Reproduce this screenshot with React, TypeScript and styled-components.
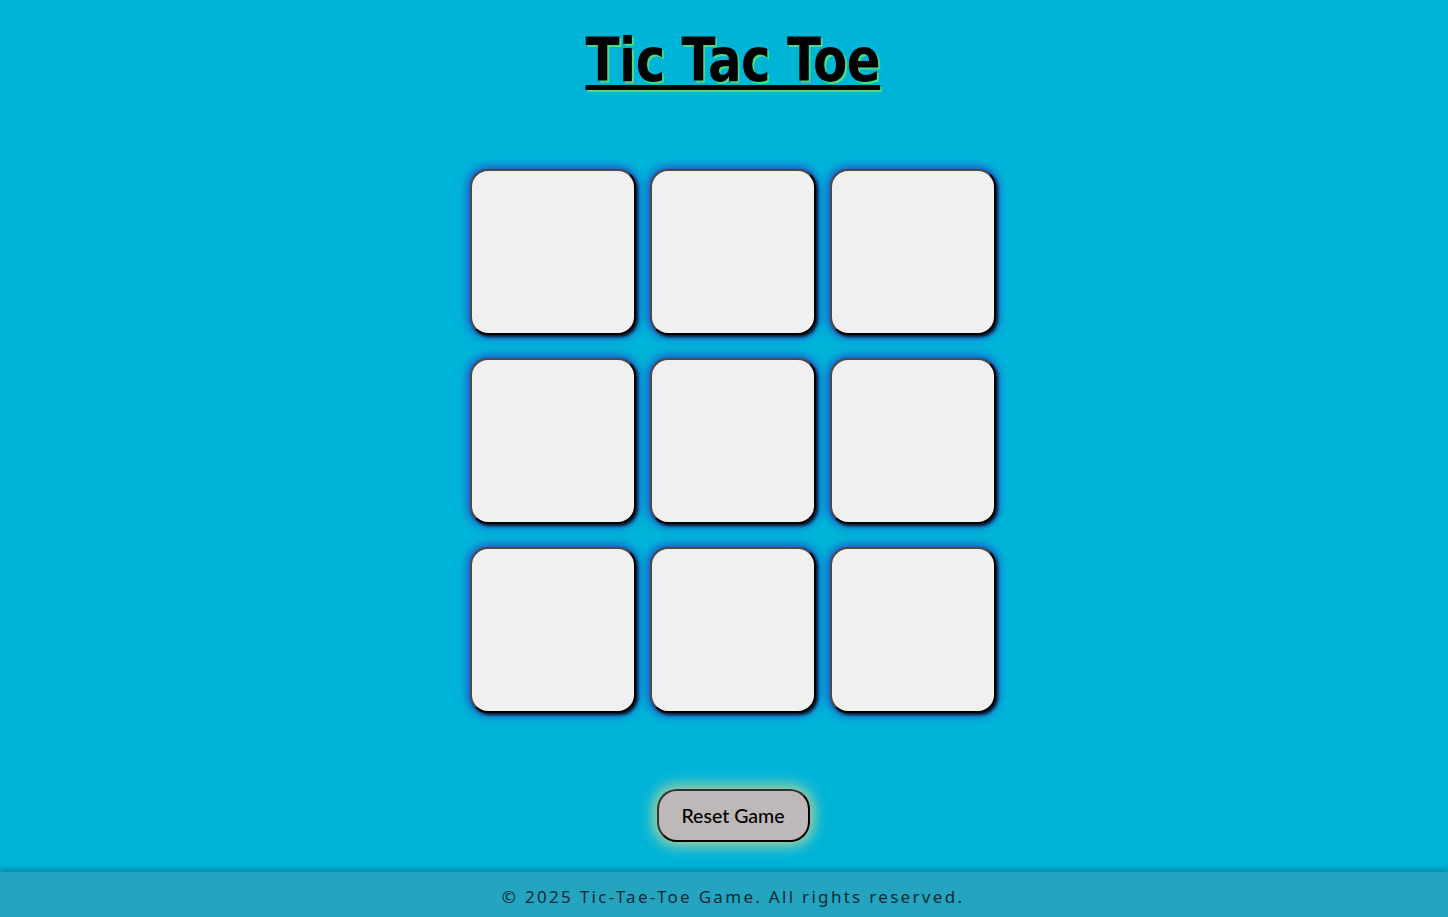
import React from "react";
import styled, { createGlobalStyle } from "styled-components";

const Global = createGlobalStyle`
  html, body { margin: 0; padding: 0; }
  body {
    background: #00b4d8;
    min-height: 917px;
    font-family: "Noto Sans", sans-serif;
  }
`;

const Page = styled.div`
  min-height: 917px;
  display: flex;
  flex-direction: column;
`;

const Main = styled.main`
  flex: 1;
  display: flex;
  flex-direction: column;
  align-items: center;
  padding-left: 18px;
`;

const Title = styled.h1`
  margin: 24px 0 0;
  font-family: Impact, "Liberation Sans Narrow", "DejaVu Sans Condensed", sans-serif;
  font-weight: 700;
  font-size: 61px;
  line-height: 72px;
  letter-spacing: -0.6px;
  transform: scaleX(0.91);
  color: #000;
  text-decoration: underline;
  text-decoration-thickness: 5px;
  text-underline-offset: 4px;
  text-shadow: 2px 2px 0 #4ade80;
`;

const Board = styled.div`
  margin-top: 73px;
  display: grid;
  grid-template-columns: repeat(3, 166px);
  grid-auto-rows: 166px;
  column-gap: 14px;
  row-gap: 23px;
`;

const Cell = styled.button`
  width: 166px;
  height: 166px;
  box-sizing: border-box;
  background: #f0f0f0;
  border: 2px solid #4a4a4a;
  border-right-color: #000;
  border-bottom-color: #000;
  border-radius: 18px;
  box-shadow: 2px 2px 3px rgba(0, 0, 0, 0.8), 0 0 10px 2px #2548c9;
  cursor: pointer;
  padding: 0;
`;

const Reset = styled.button`
  margin-top: 76px;
  width: 153px;
  height: 53px;
  box-sizing: border-box;
  background: #bfb8b8;
  border: 2px solid #333;
  border-right-color: #000;
  border-bottom-color: #000;
  border-radius: 20px;
  font-family: "Gill Sans", Lato, sans-serif;
  font-size: 19.5px;
  font-weight: 500;
  color: #000;
  box-shadow: 0 0 14px 4px rgba(230, 220, 140, 0.75);
  cursor: pointer;
`;

const Footer = styled.footer`
  margin-top: 29px;
  height: 45px;
  background: #25a4bf;
  box-shadow: 0 -3px 5px rgba(0, 90, 120, 0.45);
  display: flex;
  align-items: center;
  justify-content: center;
  padding-left: 18px;
  padding-top: 4px;
  box-sizing: border-box;
  font-family: "Noto Sans", "DejaVu Sans", sans-serif;
  font-size: 17px;
  letter-spacing: 2.3px;
  color: #0b2b35;
`;

export default function App() {
  const cells = Array.from({ length: 9 });
  return (
    <Page>
      <Global />
      <Main>
        <Title>Tic Tac Toe</Title>
        <Board>
          {cells.map((_, i) => (
            <Cell key={i} aria-label={`cell ${i + 1}`} />
          ))}
        </Board>
        <Reset>Reset Game</Reset>
      </Main>
      <Footer>© 2025 Tic-Tae-Toe Game. All rights reserved.</Footer>
    </Page>
  );
}
